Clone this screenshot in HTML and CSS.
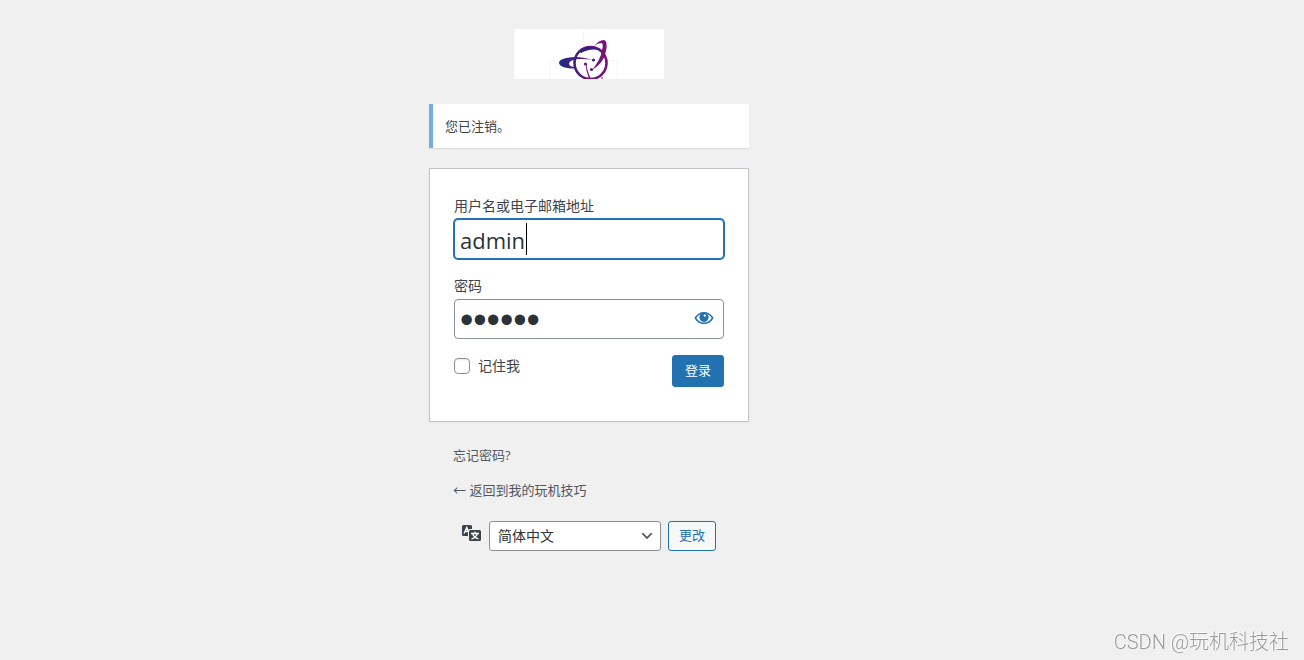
FILE: index.html
```html
<!DOCTYPE html>
<html lang="zh-CN">
<head>
<meta charset="utf-8">
<meta name="viewport" content="width=device-width, initial-scale=1">
<title>登录</title>
<link rel="stylesheet" href="styles.css">
</head>
<body class="page">
<main class="login">
  <a class="logo" href="#" aria-label="我的玩机技巧">
    <svg class="logo-art" viewBox="0 0 150 50" aria-hidden="true">
      <defs>
        <linearGradient id="orbit" gradientUnits="userSpaceOnUse" x1="45" y1="34" x2="94" y2="30">
          <stop offset="0" stop-color="#1f2a80"/>
          <stop offset=".4" stop-color="#4a1c80"/>
          <stop offset="1" stop-color="#80107a"/>
        </linearGradient>
      </defs>
      <path d="M69.500 2v14M36 31.500h12M36 31.500v18.500M95 31.500h8v18.500" fill="none" stroke="#f5f5f7"/>
      <circle cx="76.500" cy="34" r="16" fill="none" stroke="url(#orbit)" stroke-width="2.600"/>
      <path d="M65 22Q76 14 89 22Q77 18 67 24Z" fill="#33207f"/>
      <path fill-rule="evenodd" fill="url(#orbit)" d="M79 31Q69 28 61 28Q45 29 45 34Q46 39.500 62 39.500L62 38Q55 38 55 34.500Q56 30.500 64 30Q72 29.500 79 31Z"/>
      <path fill="url(#orbit)" d="M80 17Q85 11 90 11Q94 12 92 22Q90 34 78 41Q87 30 88 21Q90 14 87 14Q84 14 80 17Z"/>
      <path d="M71.500 35Q72 42 75 50L77 50Q73 42 72.500 35Z" fill="#80107a"/>
      <path d="M63 43Q68 50 78 50M88 50V48" fill="none" stroke="#80107a"/>
      <circle cx="79.500" cy="31" r="1.600" fill="#4b1f86"/>
      <circle cx="71.500" cy="35" r="1.600" fill="#6b1581"/>
      <circle cx="77.500" cy="40.500" r="1.600" fill="#551b84"/>
    </svg>
  </a>

  <p class="message" role="status">您已注销。</p>

  <form class="card">
    <div class="field">
      <label class="label" for="user">用户名或电子邮箱地址</label>
      <div class="control">
        <input class="input input-active" id="user" type="text" value="admin">
        <span class="caret"></span>
      </div>
    </div>
    <div class="field">
      <label class="label" for="pass">密码</label>
      <div class="control">
        <input class="input input-password" id="pass" type="password" value="secret">
        <button class="reveal" type="button" aria-label="显示密码">
          <svg width="20" height="20" viewBox="0 0 20 20" aria-hidden="true">
            <path fill="none" stroke="currentColor" stroke-width="1.500" d="M1.300 10C3.500 6.500 6.500 4.700 10 4.700S16.500 6.500 18.700 10C16.500 13.500 13.500 15.300 10 15.300S3.500 13.500 1.300 10Z"/>
            <circle cx="10" cy="9.300" r="4.600" fill="currentColor"/>
            <circle cx="10.800" cy="7.600" r="1.200" fill="#fff"/>
          </svg>
        </button>
      </div>
    </div>
    <div class="actions">
      <label class="remember"><input class="check" type="checkbox">记住我</label>
      <button class="button button-primary" type="submit">登录</button>
    </div>
  </form>

  <nav class="links">
    <a class="link" href="#">忘记密码?</a>
    <a class="link" href="#">← 返回到我的玩机技巧</a>
  </nav>

  <form class="language">
    <label class="language-icon" for="locale" aria-label="语言">
      <svg width="20" height="20" viewBox="0 0 20 20" aria-hidden="true">
        <path fill="#3c434a" d="M2.500 2h7q1.500 0 1.500 1.500v2.500H9q-2 0-2 2v5H2.500q-1.500 0-1.500-1.500V3.500q0-1.500 1.500-1.500ZM9.500 7h9q1.500 0 1.500 1.500v8q0 1.500-1.500 1.500h-9q-1.500 0-1.500-1.500v-8q0-1.500 1.500-1.500Z"/>
        <path fill="none" stroke="#fff" stroke-width="1.300" d="M3 10.500L5.800 4.500L7.500 9M4 8.500h3M14 8.500v1.500M10 10.500h8M16.500 10.500Q15 14.500 10.500 16M11.500 10.500Q13 14.500 17.500 16"/>
      </svg>
    </label>
    <select class="select" id="locale"><option>简体中文</option></select>
    <button class="button button-outline" type="button">更改</button>
  </form>
</main>
<footer class="credit">CSDN @玩机科技社</footer>
</body>
</html>
```
FILE: styles.css
```css
*, *::before, *::after { box-sizing: border-box; }

.page {
  margin: 0;
  min-height: 100vh;
  padding: 29px 126px 0 0;
  background: #f0f0f0;
  color: #3c434a;
  font: 13px/18px "Open Sans", "Noto Sans CJK SC", sans-serif;
}

input, select, button { font: inherit; color: inherit; }

.login { width: 100%; max-width: 320px; margin: 0 auto; }

.logo {
  display: block;
  width: 150px;
  height: 50px;
  margin: 0 auto 25px;
  background: #fff;
}
.logo-art { display: block; width: 100%; height: 100%; }

.message {
  margin: 0 0 20px;
  padding: 13px 12px;
  border-left: 4px solid #72aee6;
  background: #fff;
  box-shadow: 0 1px 1px rgba(0, 0, 0, .08);
}

.card {
  padding: 26px 24px 34px;
  border: 1px solid #c3c4c7;
  background: #fff;
  box-shadow: 0 1px 3px rgba(0, 0, 0, .04);
}

.field { margin-bottom: 16px; }
.label { display: block; margin-bottom: 3px; font-size: 14px; line-height: 21px; }
.control { position: relative; }

.input {
  display: block;
  width: 100%;
  height: 40px;
  padding: 2px 5px 0;
  border: 1px solid #8c8f94;
  border-radius: 4px;
  background: #fff;
  color: #2c3338;
  font-size: 22px;
  outline: none;
}
.input-active { border-color: #2271b1; box-shadow: 0 0 0 1px #2271b1; caret-color: transparent; }
.input-password { padding-right: 40px; font-family: "Liberation Sans", sans-serif; font-size: 38px; }

.caret { position: absolute; left: 72px; top: 4px; width: 1px; height: 32px; background: #000; }

.reveal {
  position: absolute;
  top: 0;
  right: 0;
  display: grid;
  place-items: center;
  width: 40px;
  height: 38px;
  padding: 0;
  border: 0;
  background: none;
  color: #2271b1;
}

.actions { display: flex; justify-content: space-between; align-items: flex-start; }
.remember { display: flex; align-items: center; gap: 8px; font-size: 14px; line-height: 22px; }
.check {
  appearance: none;
  width: 16px;
  height: 16px;
  margin: 0;
  border: 1px solid #8c8f94;
  border-radius: 4px;
  background: #fff;
  box-shadow: inset 0 1px 2px rgba(0, 0, 0, .1);
}

.button { padding: 0 12px 2px; border: 1px solid #2271b1; border-radius: 3px; white-space: nowrap; }
.button-primary { height: 32px; background: #2271b1; color: #fff; }
.button-outline { width: 48px; height: 30px; padding: 0 0 2px; background: #f6f7f7; color: #2271b1; }

.links {
  display: flex;
  flex-direction: column;
  align-items: flex-start;
  gap: 17px;
  padding: 24px 24px 0;
}
.link { color: #50575e; text-decoration: none; }

.language {
  display: flex;
  align-items: center;
  padding-left: 32px;
  margin-top: 22px;
}
.language-icon { display: flex; align-self: flex-start; margin: 2px 8px 0 0; }
.select {
  appearance: none;
  width: 172px;
  height: 30px;
  margin-right: 7px;
  padding: 0 24px 0 8px;
  border: 1px solid #8c8f94;
  border-radius: 3px;
  background: #fff url("data:image/svg+xml,%3Csvg xmlns='http://www.w3.org/2000/svg' viewBox='0 0 20 20'%3E%3Cpath d='M5 6l5 5 5-5 2 1-7 7-7-7 2-1z' fill='%23555'/%3E%3C/svg%3E") no-repeat right 5px center / 16px 16px;
  color: #2c3338;
  font-size: 14px;
}

.credit {
  position: fixed;
  right: 15px;
  bottom: 4px;
  color: #999;
  font: 300 20px/28px Roboto, "Noto Sans CJK SC", sans-serif;
  text-shadow: -1px -1px 0 #fff;
}
```
